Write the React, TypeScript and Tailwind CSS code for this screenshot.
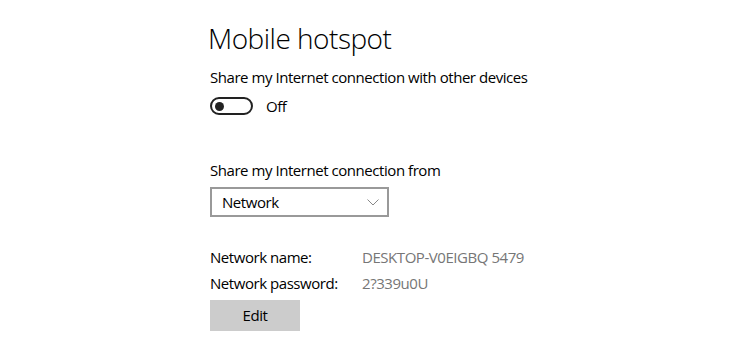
export default function App() {
  return (
    <div
      className="w-[750px] h-[354px] bg-white text-black pl-[210px] pt-[18px]"
      style={{ fontFamily: '"Open Sans", "Noto Sans", sans-serif' }}
    >
      <h1 className="-ml-[2px] text-[28px] font-light leading-[40px] tracking-[-0.5px]">
        Mobile hotspot
      </h1>

      <p className="mt-[9px] text-[15px] leading-[20px] tracking-[-0.45px]">
        Share my Internet connection with other devices
      </p>
      <div className="mt-[9px] flex items-center gap-[13px]">
        <div className="w-[43px] h-[18px] rounded-full border-2 border-[#222] flex items-center pl-[3px]">
          <div className="w-[9px] h-[9px] rounded-full bg-[#222]" />
        </div>
        <span className="text-[15px] leading-[20px] tracking-[-0.45px]">Off</span>
      </div>

      <p className="mt-[44px] text-[15px] leading-[20px] tracking-[-0.45px]">
        Share my Internet connection from
      </p>
      <button
        type="button"
        className="mt-[7px] w-[179px] h-[30px] border-2 border-[#999] bg-white flex items-center justify-between pl-[10px] pr-[8px] text-[15px] tracking-[-0.45px]"
      >
        <span>Network</span>
        <svg width="12" height="7" viewBox="0 0 12 7" className="text-[#888]">
          <path d="M0.5 0.5 L6 6 L11.5 0.5" fill="none" stroke="currentColor" strokeWidth="1" />
        </svg>
      </button>

      <div className="mt-[30px] grid grid-cols-[152px_auto] gap-y-[6px] text-[15px] leading-[20px] tracking-[-0.45px]">
        <span>Network name:</span>
        <span className="text-[#767676]">DESKTOP-V0EIGBQ 5479</span>
        <span>Network password:</span>
        <span className="text-[#767676]">2?339u0U</span>
      </div>
      <button
        type="button"
        className="mt-[7px] w-[90px] h-[31px] bg-[#cccccc] text-[15px] tracking-[-0.45px]"
      >
        Edit
      </button>
    </div>
  )
}
